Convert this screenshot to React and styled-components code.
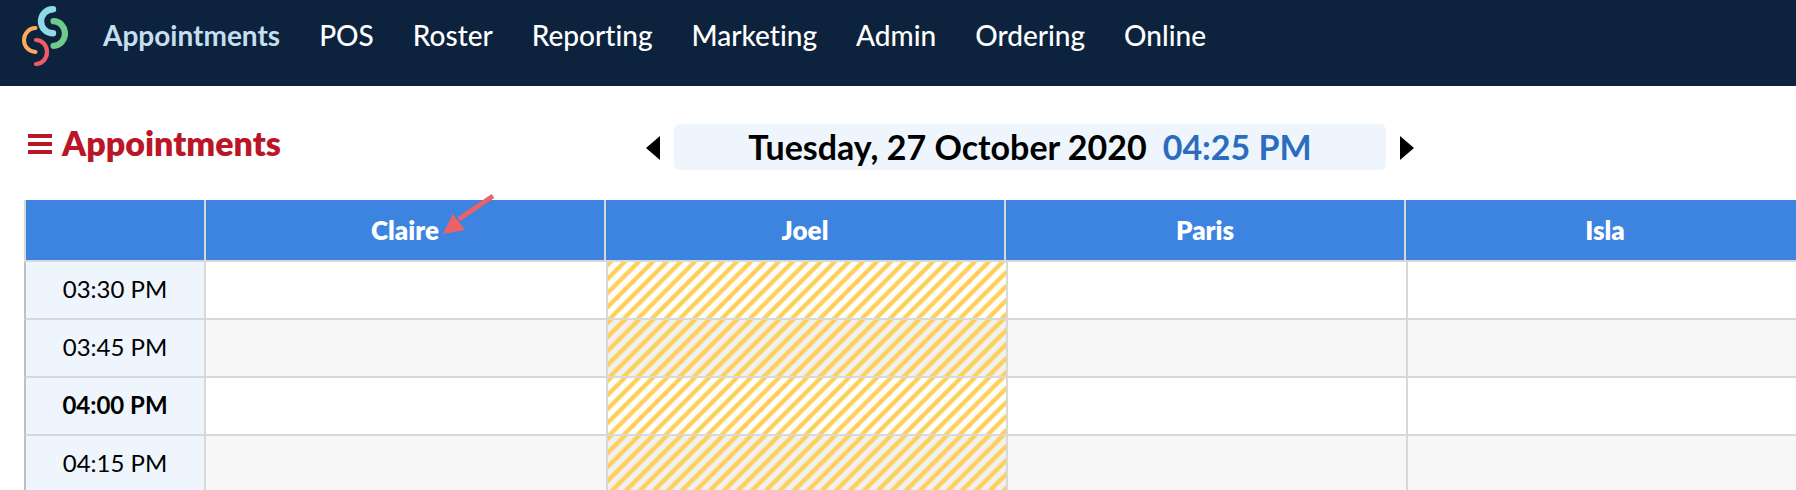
import React from 'react';
import styled, { createGlobalStyle, css } from 'styled-components';

const GlobalStyle = createGlobalStyle`
  * {
    box-sizing: border-box;
  }

  body {
    margin: 0;
    overflow: hidden;
    background: #fff;
    color: #000;
    font-family: Lato, 'Liberation Sans', sans-serif;
    font-variant-ligatures: none;
  }
`;

const NavBar = styled.header`
  display: flex;
  align-items: center;
  gap: 35px;
  height: 86px;
  padding: 0 22px 14px;
  background: #0d233d;
`;

const LogoLink = styled.a`
  display: block;
  height: 60px;

  svg {
    display: block;
  }
`;

const NavLinks = styled.nav`
  display: flex;
  gap: 39px;
  padding-bottom: 2px;
`;

const NavLink = styled.a`
  color: ${({ $active }) => ($active ? '#c5def0' : '#fff')};
  font-size: 28px;
  font-weight: ${({ $active }) => ($active ? 700 : 500)};
  line-height: 36px;
  text-decoration: none;
`;

const Toolbar = styled.section`
  display: grid;
  grid-template-columns: minmax(260px, 618px) minmax(0, 768px);
  align-items: start;
  padding: 38px 28px 30px;
`;

const TitleGroup = styled.div`
  display: flex;
  align-items: center;
  gap: 10px;
`;

const MenuButton = styled.button`
  display: flex;
  flex-direction: column;
  gap: 4px;
  width: 24px;
  padding: 0;
  border: 0;
  background: none;

  span {
    height: 4px;
    background: #ba1628;
  }
`;

const Title = styled.h1`
  margin: 0;
  padding-bottom: 2px;
  color: #ba1628;
  font-size: 34px;
  font-weight: 800;
  line-height: 38px;
`;

const DatePicker = styled.div`
  display: flex;
  align-items: center;
  gap: 14px;
`;

const StepButton = styled.button`
  flex: none;
  padding: 2px 0 0;
  border: 0;
  background: none;

  svg {
    display: block;
  }
`;

const DateButton = styled.button`
  display: flex;
  flex: 1;
  justify-content: center;
  gap: 16px;
  padding: 0;
  border: 0;
  border-radius: 6px;
  background: #eef5fc;
  color: #000;
  font-family: inherit;
  font-size: 34px;
  font-weight: 700;
  line-height: 46px;
  white-space: nowrap;

  time {
    color: #2b6cbf;
  }
`;

const Schedule = styled.main`
  padding-left: 24px;
`;

const Grid = styled.table`
  width: 100%;
  min-width: 1782px;
  table-layout: fixed;
  border-collapse: separate;
  border-spacing: 0;
`;

const HeadCell = styled.th`
  width: ${({ $corner }) => ($corner ? '182px' : 'auto')};
  height: 62px;
  padding: 0;
  border-right: 2px solid #d8d8d8;
  border-bottom: 2px solid #d8d8d8;
  background: #3d84e1;
  color: #fff;
  font-size: 26px;
  font-weight: 800;

  &:first-child {
    border-left: 2px solid #d8d8d8;
  }
`;

const StaffName = styled.span`
  position: relative;
`;

const PointerArrow = styled.svg`
  position: absolute;
  left: 100%;
  bottom: 12px;
  margin-left: 4px;
`;

const TimeCell = styled.th`
  height: 58px;
  padding: 0 0 4px;
  border: 2px solid #d8d8d8;
  border-top: 0;
  border-left-color: #c0c0c0;
  background: #eef5fc;
  font-size: 24px;
  font-weight: ${({ $hour }) => ($hour ? 700 : 400)};
`;

const stripes = css`
  background-image: linear-gradient(
    135deg,
    #ffcf58 16%,
    transparent 24%,
    transparent 44%,
    #ffcf58 52%,
    #ffcf58 66%,
    transparent 74%,
    transparent 94%,
    #ffcf58 102%
  );
  background-size: 14px 14px;
`;

const Slot = styled.td`
  padding: 0;
  border-bottom: 2px solid #d8d8d8;
  background-color: ${({ $shaded, $blocked }) => {
    if (!$shaded) return '#fff';
    return $blocked ? '#f0f0f0' : '#f7f7f7';
  }};
  ${({ $blocked }) => $blocked && stripes}

  & + & {
    border-left: 2px solid #d8d8d8;
  }
`;

const navItems = [
  'Appointments',
  'POS',
  'Roster',
  'Reporting',
  'Marketing',
  'Admin',
  'Ordering',
  'Online',
];

const staff = [
  { name: 'Claire', pointer: true },
  { name: 'Joel', blocked: true },
  { name: 'Paris' },
  { name: 'Isla' },
];

const times = ['03:30 PM', '03:45 PM', '04:00 PM', '04:15 PM'];

const Logo = () => (
  <svg width="46" height="60" viewBox="22 6 46 60" fill="none" strokeLinecap="round">
    <path d="M53 9.3A12 12 0 0 0 53 33.3" stroke="#8edbe5" strokeWidth="6.4" />
    <path d="M53.5 21.2A11.5 12.3 0 0 1 53.5 45.8" stroke="#6fca8b" strokeWidth="6.2" />
    <path d="M35.5 28A11.5 12 0 0 0 35.5 52" stroke="#fbac5b" strokeWidth="4" />
    <path d="M36 40A11 12 0 0 1 36 64" stroke="#ee5c66" strokeWidth="4.2" />
  </svg>
);

const App = () => (
  <>
    <GlobalStyle />
    <NavBar>
      <LogoLink href="#" aria-label="Home">
        <Logo />
      </LogoLink>
      <NavLinks>
        {navItems.map((item, i) => (
          <NavLink key={item} href="#" $active={i === 0}>
            {item}
          </NavLink>
        ))}
      </NavLinks>
    </NavBar>

    <Toolbar>
      <TitleGroup>
        <MenuButton type="button" aria-label="Menu">
          <span />
          <span />
          <span />
        </MenuButton>
        <Title>Appointments</Title>
      </TitleGroup>
      <DatePicker>
        <StepButton type="button" aria-label="Previous day">
          <svg width="14" height="24" viewBox="0 0 14 24">
            <path d="M14 0V24L0 12Z" />
          </svg>
        </StepButton>
        <DateButton type="button">
          <span>Tuesday, 27 October 2020</span>
          <time>04:25 PM</time>
        </DateButton>
        <StepButton type="button" aria-label="Next day">
          <svg width="14" height="24" viewBox="0 0 14 24">
            <path d="M0 0V24L14 12Z" />
          </svg>
        </StepButton>
      </DatePicker>
    </Toolbar>

    <Schedule>
      <Grid>
        <thead>
          <tr>
            <HeadCell as="td" $corner />
            {staff.map(({ name, pointer }) => (
              <HeadCell key={name} scope="col">
                <StaffName>
                  {name}
                  {pointer && (
                    <PointerArrow width="52" height="40" viewBox="0 0 52 40" aria-hidden="true">
                      <path d="M16 25L50 2" stroke="#ee6266" strokeWidth="4.6" />
                      <path d="M0 40L10 20L22 36Z" fill="#ee6266" />
                    </PointerArrow>
                  )}
                </StaffName>
              </HeadCell>
            ))}
          </tr>
        </thead>
        <tbody>
          {times.map((time, i) => (
            <tr key={time}>
              <TimeCell scope="row" $hour={time.includes(':00')}>
                {time}
              </TimeCell>
              {staff.map(({ name, blocked }) => (
                <Slot key={name} $shaded={i % 2 === 1} $blocked={blocked} />
              ))}
            </tr>
          ))}
        </tbody>
      </Grid>
    </Schedule>
  </>
);

export default App;
